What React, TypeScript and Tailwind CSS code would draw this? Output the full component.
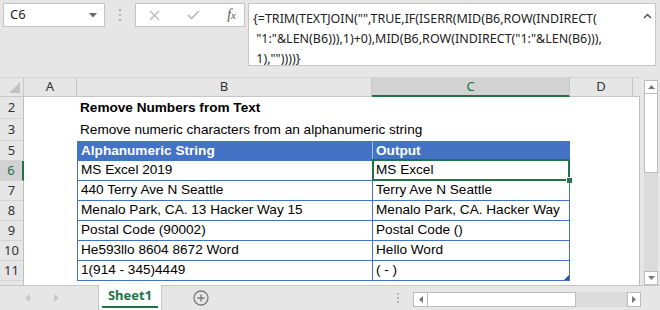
import React from 'react'

type Row = { n: string; h: string; b?: string; c?: string; kind?: 'title' | 'sub' | 'head' | 'data' }

const rows: Row[] = [
  { n: '2', h: 'h-[22px]', b: 'Remove Numbers from Text', kind: 'title' },
  { n: '3', h: 'h-[22px]', b: 'Remove numeric characters from an alphanumeric string', kind: 'sub' },
  { n: '5', h: 'h-[20px]', b: 'Alphanumeric String', c: 'Output', kind: 'head' },
  { n: '6', h: 'h-[20px]', b: 'MS Excel 2019', c: 'MS Excel', kind: 'data' },
  { n: '7', h: 'h-[20px]', b: '440 Terry Ave N Seattle', c: 'Terry Ave N Seattle', kind: 'data' },
  { n: '8', h: 'h-[20px]', b: 'Menalo Park, CA. 13 Hacker Way 15', c: 'Menalo Park, CA. Hacker Way', kind: 'data' },
  { n: '9', h: 'h-[20px]', b: 'Postal Code (90002)', c: 'Postal Code ()', kind: 'data' },
  { n: '10', h: 'h-[20px]', b: 'He593llo 8604 8672 Word', c: 'Hello Word', kind: 'data' },
  { n: '11', h: 'h-[20px]', b: '1(914 - 345)4449', c: '( - )', kind: 'data' },
]

const ui = "font-['Noto_Sans',sans-serif]"
const cellFont = "font-['Liberation_Sans',Arial,sans-serif] text-[13.6px]"

function TopBar() {
  return (
    <div className="h-[78px] flex items-start pt-[3px] pl-[3px] shrink-0">
      {/* name box */}
      <div className={`w-[102px] h-[24px] bg-white border border-[#c6c6c6] flex items-center justify-between pl-[6px] pr-[7px] ${ui} text-[13px] text-[#222]`}>
        <span>C6</span>
        <svg width="8" height="5" viewBox="0 0 8 5"><path d="M0 0h8L4 4.5z" fill="#666" /></svg>
      </div>
      <div className="w-[30px] h-[24px] flex flex-col items-center justify-center gap-[3px]">
        <span className="w-[2px] h-[2px] bg-[#b4b4b4]" />
        <span className="w-[2px] h-[2px] bg-[#b4b4b4]" />
        <span className="w-[2px] h-[2px] bg-[#b4b4b4]" />
      </div>
      {/* cancel / enter / fx */}
      <div className="w-[110px] h-[24px] bg-white border border-[#c6c6c6] flex items-center pl-[13px] pr-[8px] justify-between">
        <svg width="11" height="11" viewBox="0 0 11 11"><path d="M1 1l9 9M10 1l-9 9" stroke="#b9b9b9" strokeWidth="1.3" /></svg>
        <svg width="13" height="10" viewBox="0 0 13 10"><path d="M1 5l3.5 3.5L12 1" stroke="#b9b9b9" strokeWidth="1.6" fill="none" /></svg>
        <span className="font-['Liberation_Serif',serif] italic text-[14px] text-[#555] leading-none">f<span className="text-[11px]">x</span></span>
      </div>
      {/* formula */}
      <div className={`ml-[3px] w-[408px] h-[63px] bg-white border border-[#c6c6c6] flex ${ui} text-[12.5px] text-[#222] leading-[20px]`}>
        <div className="flex-1 pl-[4px] pt-[5px] whitespace-nowrap">
          <div>{'{=TRIM(TEXTJOIN("",TRUE,IF(ISERR(MID(B6,ROW(INDIRECT('}</div>
          <div>&nbsp;{'"1:"&LEN(B6))),1)+0),MID(B6,ROW(INDIRECT("1:"&LEN(B6))),'}</div>
          <div>&nbsp;{'1),""))))}'}</div>
        </div>
        <div className="w-[16px] pt-[9px] flex justify-center">
          <svg width="9" height="6" viewBox="0 0 9 6"><path d="M1 5l3.5-3.5L8 5" stroke="#555" strokeWidth="1.5" fill="none" /></svg>
        </div>
      </div>
    </div>
  )
}

function ColHeader() {
  const base = `h-[19px] flex items-center justify-center border-r border-b border-[#c6c6c6] ${ui} text-[13px] text-[#333]`
  return (
    <div className="flex h-[19px] border-t border-[#d6d6d6] box-content -mt-px">
      <div className="w-[24px] h-[19px] border-r border-b border-[#c6c6c6] relative">
        <svg className="absolute right-[3px] bottom-[3px]" width="11" height="11" viewBox="0 0 11 11"><path d="M11 0v11H0z" fill="#c2c2c2" /></svg>
      </div>
      <div className={`w-[53px] ${base}`}>A</div>
      <div className={`w-[295px] ${base}`}>B</div>
      <div className={`w-[198px] h-[19px] flex items-center justify-center bg-[#d2d2d2] border-r border-[#c6c6c6] border-b-2 border-b-[#217346] ${ui} text-[13px] text-[#217346]`}>C</div>
      <div className={`w-[63px] ${base}`}>D</div>
      <div className="w-[7px] h-[19px] border-b border-[#c6c6c6]" />
    </div>
  )
}

function BodyRow({ r }: { r: Row }) {
  const sel = r.n === '6'
  const inTable = r.kind === 'head' || r.kind === 'data'
  const head = r.kind === 'head'
  const last = r.n === '11'
  return (
    <div className={`flex ${r.h}`}>
      <div
        className={`w-[24px] shrink-0 flex items-center justify-center ${ui} text-[13px] border-b border-[#d4d4d4] ${
          sel ? 'bg-[#d2d2d2] text-[#217346] border-r-2 border-r-[#217346]' : 'bg-[#e6e6e6] text-[#333] border-r border-r-[#bdbdbd]'
        }`}
      >
        {r.n}
      </div>
      <div className="w-[616px] bg-white flex border-r border-[#bdbdbd]">
        <div className="w-[53px] shrink-0" />
        <div
          className={`w-[295px] shrink-0 flex items-center pl-[3px] whitespace-nowrap ${cellFont} ${
            inTable ? 'border-l border-b border-[#4472c4]' : ''
          } ${head ? 'bg-[#4472c4] text-white font-bold border-t' : 'text-black'} ${r.kind === 'title' ? 'font-bold' : ''}`}
        >
          {r.b}
        </div>
        <div
          className={`relative w-[198px] shrink-0 flex items-center pl-[3px] whitespace-nowrap ${cellFont} ${
            inTable ? 'border-l border-r border-b border-[#4472c4]' : ''
          } ${head ? 'bg-[#4472c4] text-white font-bold border-t border-l-[#a3bbe6]' : 'text-black'}`}
        >
          {r.c}
          {sel && (
            <>
              <div className="absolute -top-[2px] -left-[1px] -right-[1px] -bottom-[1px] border-2 border-[#217346]" />
              <div className="absolute -right-[4px] -bottom-[4px] w-[5px] h-[5px] bg-[#217346] border border-white box-content" />
            </>
          )}
          {last && (
            <svg className="absolute right-0 bottom-0" width="5" height="5" viewBox="0 0 5 5"><path d="M5 0v5H0z" fill="#2f4f9f" /></svg>
          )}
        </div>
        <div className="flex-1" />
      </div>
    </div>
  )
}

function VScroll() {
  return (
    <div className="w-[14px] ml-[4px] pt-[2px] flex flex-col">
      <div className="h-[14px] bg-white border border-[#bdbdbd] flex items-center justify-center">
        <svg width="7" height="4" viewBox="0 0 7 4"><path d="M0 4L3.5 0 7 4z" fill="#777" /></svg>
      </div>
      <div className="h-[79px] bg-white border border-[#bdbdbd] border-t-0" />
      <div className="flex-1 bg-[#dbdbdb]" />
      <div className="h-[14px] bg-white border border-[#bdbdbd] flex items-center justify-center">
        <svg width="7" height="4" viewBox="0 0 7 4"><path d="M0 0h7L3.5 4z" fill="#777" /></svg>
      </div>
    </div>
  )
}

function BottomBar() {
  return (
    <div className="h-[25px] flex border-t border-[#c6c6c6] shrink-0">
      <div className="w-[98px] flex items-center pl-[25px] gap-[24px]">
        <svg width="5" height="8" viewBox="0 0 5 8"><path d="M5 0v8L0 4z" fill="#c8c8c8" /></svg>
        <svg width="5" height="8" viewBox="0 0 5 8"><path d="M0 0v8l5-4z" fill="#c8c8c8" /></svg>
      </div>
      <div className={`-mt-px w-[64px] h-[25px] bg-white border-l border-r border-[#c6c6c6] flex flex-col items-center ${ui}`}>
        <span className="flex-1 flex items-center text-[13px] font-bold text-[#217346]">Sheet1</span>
        <span className="w-[56px] h-[2px] bg-[#217346] mb-[2px]" />
      </div>
      <div className="w-[86px] flex items-center justify-center pr-[8px]">
        <svg width="16" height="16" viewBox="0 0 16 16">
          <circle cx="8" cy="8" r="7" stroke="#7b7b7b" strokeWidth="1.3" fill="none" />
          <path d="M8 4.5v7M4.5 8h7" stroke="#7b7b7b" strokeWidth="1.4" />
        </svg>
      </div>
      <div className="w-[165px] flex items-center justify-end pr-[14px]">
        <div className="flex flex-col gap-[2px]">
          <span className="w-[2px] h-[2px] bg-[#b4b4b4]" />
          <span className="w-[2px] h-[2px] bg-[#b4b4b4]" />
          <span className="w-[2px] h-[2px] bg-[#b4b4b4]" />
        </div>
      </div>
      <div className="flex items-start pt-[6px] h-full">
        <div className="w-[15px] h-[15px] bg-white border border-[#bdbdbd] flex items-center justify-center">
          <svg width="4" height="7" viewBox="0 0 4 7"><path d="M4 0v7L0 3.5z" fill="#777" /></svg>
        </div>
        <div className="w-[148px] h-[15px] bg-white border border-[#bdbdbd] border-l-0" />
        <div className="w-[51px] h-[15px] bg-[#dbdbdb]" />
        <div className="w-[14px] h-[15px] bg-white border border-[#bdbdbd] flex items-center justify-center">
          <svg width="4" height="7" viewBox="0 0 4 7"><path d="M0 0v7l4-3.5z" fill="#777" /></svg>
        </div>
      </div>
    </div>
  )
}

export default function App() {
  return (
    <div className="w-[660px] h-[310px] bg-[#e6e6e6] flex flex-col overflow-hidden">
      <TopBar />
      <div className="flex h-[207px]">
        <div className="w-[640px] flex flex-col">
          <ColHeader />
          {rows.map(r => <BodyRow key={r.n} r={r} />)}
          <div className="flex flex-1">
            <div className="w-[24px] bg-[#e6e6e6] border-r border-[#bdbdbd]" />
            <div className="w-[616px] bg-white border-r border-[#bdbdbd]" />
          </div>
        </div>
        <VScroll />
      </div>
      <BottomBar />
    </div>
  )
}
